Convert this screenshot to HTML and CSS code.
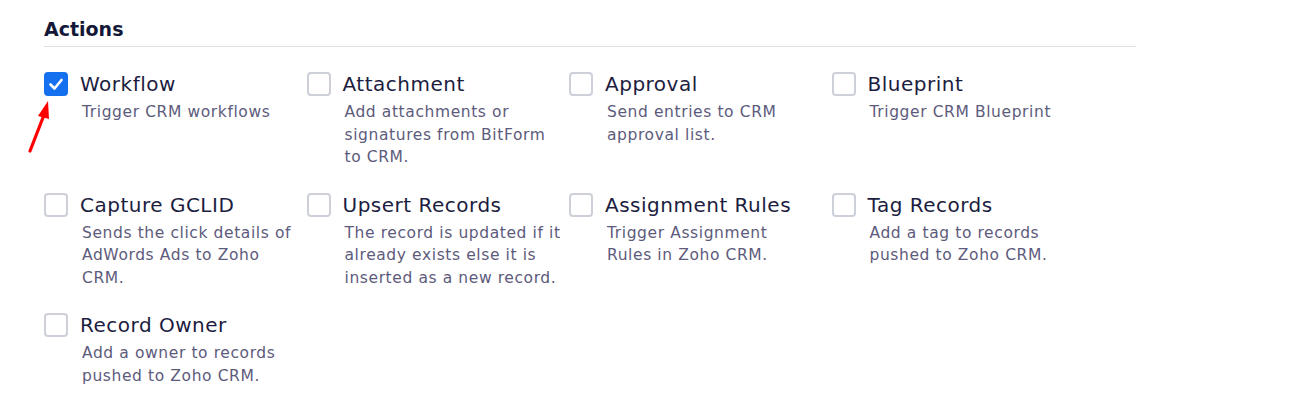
FILE: index.html
```html
<!DOCTYPE html>
<html>
<head>
<meta charset="utf-8">
<link rel="stylesheet" href="styles.css">
</head>
<body>
<section class="actions">
  <h2 class="heading">Actions</h2>
  <div class="grid">
    <label class="item">
      <span class="box checked">
        <svg viewBox="0 0 24 24" width="24" height="24"><path d="M6.5 12.5 L10.5 16.5 L17.5 8" fill="none" stroke="#fff" stroke-width="2.6" stroke-linecap="round" stroke-linejoin="round"/></svg>
      </span>
      <span class="text">
        <span class="title">Workflow</span>
        <span class="desc">Trigger CRM workflows</span>
      </span>
      <svg class="arrow" viewBox="0 0 30 60" width="30" height="60"><path d="M6 53 L20 17" stroke="#f00" stroke-width="3.2" stroke-linecap="round"/><path d="M24 3 L14 18 L25 21 Z" fill="#f00"/></svg>
    </label>
    <label class="item">
      <span class="box"></span>
      <span class="text">
        <span class="title">Attachment</span>
        <span class="desc">Add attachments or<br>signatures from BitForm<br>to CRM.</span>
      </span>
    </label>
    <label class="item">
      <span class="box"></span>
      <span class="text">
        <span class="title">Approval</span>
        <span class="desc">Send entries to CRM<br>approval list.</span>
      </span>
    </label>
    <label class="item">
      <span class="box"></span>
      <span class="text">
        <span class="title">Blueprint</span>
        <span class="desc">Trigger CRM Blueprint</span>
      </span>
    </label>
    <label class="item">
      <span class="box"></span>
      <span class="text">
        <span class="title">Capture GCLID</span>
        <span class="desc">Sends the click details of<br>AdWords Ads to Zoho<br>CRM.</span>
      </span>
    </label>
    <label class="item">
      <span class="box"></span>
      <span class="text">
        <span class="title">Upsert Records</span>
        <span class="desc">The record is updated if it<br>already exists else it is<br>inserted as a new record.</span>
      </span>
    </label>
    <label class="item">
      <span class="box"></span>
      <span class="text">
        <span class="title">Assignment Rules</span>
        <span class="desc">Trigger Assignment<br>Rules in Zoho CRM.</span>
      </span>
    </label>
    <label class="item">
      <span class="box"></span>
      <span class="text">
        <span class="title">Tag Records</span>
        <span class="desc">Add a tag to records<br>pushed to Zoho CRM.</span>
      </span>
    </label>
    <label class="item">
      <span class="box"></span>
      <span class="text">
        <span class="title">Record Owner</span>
        <span class="desc">Add a owner to records<br>pushed to Zoho CRM.</span>
      </span>
    </label>
  </div>
</section>
</body>
</html>
```

FILE: styles.css
```css
* { box-sizing: border-box; }
html, body { margin: 0; padding: 0; background: #fff; }
body {
  font-family: "DejaVu Sans", "Open Sans", sans-serif;
  color: #1c1d40;
}
.actions {
  width: 1136px;
  padding: 17px 0 0 44px;
}
.heading {
  margin: 0;
  font-size: 19px;
  line-height: 24px;
  font-weight: bold;
  color: #141838;
  padding-bottom: 5px;
  border-bottom: 1px solid #e1e1e4;
}
.grid {
  display: grid;
  grid-template-columns: repeat(4, 262.5px);
  row-gap: 24px;
  padding-top: 25px;
}
.item {
  position: relative;
  display: flex;
  align-items: flex-start;
  gap: 12px;
}
.box {
  flex: 0 0 24px;
  width: 24px;
  height: 24px;
  border: 2px solid #cdd0d8;
  border-radius: 4px;
  background: #fff;
}
.box.checked {
  background: #1570ef;
  border-color: #1570ef;
  display: flex;
  align-items: center;
  justify-content: center;
}
.box.checked svg { display: block; flex: none; }
.text {
  display: flex;
  flex-direction: column;
}
.title {
  font-size: 20px;
  line-height: 24px;
  letter-spacing: 0.5px;
  color: #1c1d40;
  white-space: nowrap;
}
.desc {
  margin-top: 5px;
  padding-left: 2px;
  font-size: 15.5px;
  line-height: 22.5px;
  letter-spacing: 0.6px;
  color: #5d5b7c;
  white-space: nowrap;
}
.arrow {
  position: absolute;
  left: -20px;
  top: 26px;
}
```
